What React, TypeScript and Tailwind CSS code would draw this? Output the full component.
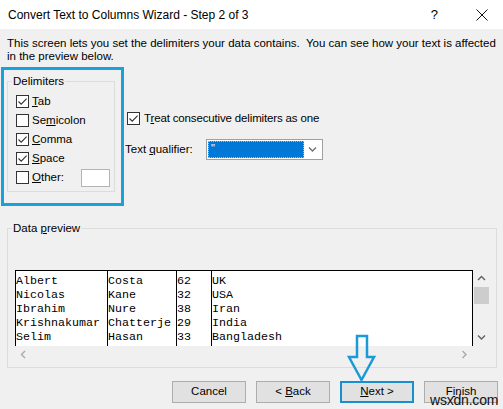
import React from "react";

const rows: [string, string, string, string][] = [
  ["Albert", "Costa", "62", "UK"],
  ["Nicolas", "Kane", "32", "USA"],
  ["Ibrahim", "Nure", "38", "Iran"],
  ["Krishnakumar", "Chatterje", "29", "India"],
  ["Selim", "Hasan", "33", "Bangladesh"],
];

function Check({ checked }: { checked: boolean }) {
  return (
    <span className="flex h-[13px] w-[13px] shrink-0 items-center justify-center border border-[#333333] bg-white">
      {checked && (
        <svg width="11" height="11" viewBox="0 0 11 11">
          <path d="M1.5 5.5 L4.2 8.2 L9.6 2.6" fill="none" stroke="#333333" strokeWidth="1.1" />
        </svg>
      )}
    </span>
  );
}

function Key({ children }: { children: React.ReactNode }) {
  return <span className="underline underline-offset-[1px]">{children}</span>;
}

function Chevron({ dir, color = "#606060" }: { dir: "up" | "down" | "left" | "right"; color?: string }) {
  const d = {
    up: "M1 5 L4.5 1.5 L8 5",
    down: "M1 1.5 L4.5 5 L8 1.5",
    left: "M5 1 L1.5 4.5 L5 8",
    right: "M1.5 1 L5 4.5 L1.5 8",
  }[dir];
  const horiz = dir === "up" || dir === "down";
  return (
    <svg width={horiz ? 9 : 7} height={horiz ? 7 : 9} viewBox={horiz ? "0 0 9 7" : "0 0 7 9"}>
      <path d={d} fill="none" stroke={color} strokeWidth="1.4" />
    </svg>
  );
}

function Button({ children, focused }: { children: React.ReactNode; focused?: boolean }) {
  return (
    <div
      className={
        "flex h-[22px] w-[74px] items-center justify-center whitespace-pre bg-[#e1e1e1] text-black " +
        (focused ? "border-2 border-[#1a8fd0]" : "border border-[#adadad]")
      }
    >
      {children}
    </div>
  );
}

export default function App() {
  return (
    <div className="relative flex h-[409px] w-[503px] flex-col overflow-hidden bg-[#f0f0f0] font-['Liberation_Sans',Arial,sans-serif] text-[11.5px] text-black">
      {/* title bar */}
      <div className="flex h-[29px] shrink-0 items-center bg-white pl-[8px]">
        <span className="text-[12px]">Convert Text to Columns Wizard - Step 2 of 3</span>
        <span className="ml-auto mr-[38px] text-[13px]">?</span>
        <svg className="mr-[15px]" width="12" height="12" viewBox="0 0 12 12">
          <path d="M0.5 0.5 L11.5 11.5 M11.5 0.5 L0.5 11.5" stroke="#111" strokeWidth="1" />
        </svg>
      </div>

      {/* description */}
      <div className="whitespace-pre pl-[7px] pt-[8px] leading-[13px]">
        {"This screen lets you set the delimiters your data contains.  You can see how your text is affected"}
        <br />
        in the preview below.
      </div>

      {/* delimiters + options */}
      <div className="mt-[4px] flex">
        <div className="ml-[1px] h-[139px] w-[123px] shrink-0 border-[3px] border-[#1aa0dc] pl-[3px] pr-[6px] pt-[11px]">
          <div className="relative h-[111px] border border-[#dcdcdc] pl-[8px] pt-[10px]">
            <span className="absolute -top-[8px] left-[4px] bg-[#f0f0f0] px-[1px] leading-[14px]">Delimiters</span>
            <div className="flex h-[19px] items-center gap-[3px]">
              <Check checked />
              <span>
                <Key>T</Key>ab
              </span>
            </div>
            <div className="flex h-[19px] items-center gap-[3px]">
              <Check checked={false} />
              <span>
                Se<Key>m</Key>icolon
              </span>
            </div>
            <div className="flex h-[19px] items-center gap-[3px]">
              <Check checked />
              <span>
                <Key>C</Key>omma
              </span>
            </div>
            <div className="flex h-[19px] items-center gap-[3px]">
              <Check checked />
              <span>
                <Key>S</Key>pace
              </span>
            </div>
            <div className="flex h-[19px] items-center gap-[3px]">
              <Check checked={false} />
              <span>
                <Key>O</Key>ther:
              </span>
              <div className="ml-[14px] h-[18px] w-[29px] border border-[#b4b4b4] bg-white" />
            </div>
          </div>
        </div>

        <div className="flex flex-col pl-[1px] pt-[43px]">
          <div className="ml-[2px] flex items-center gap-[4px]">
            <Check checked />
            <span className="tracking-[-0.15px]">
              T<Key>r</Key>eat consecutive delimiters as one
            </span>
          </div>
          <div className="mt-[12px] flex items-center">
            <span className="w-[81px]">
              Text <Key>q</Key>ualifier:
            </span>
            <div className="flex h-[21px] w-[117px] border border-[#a0a0a0] bg-white p-[1px]">
              <div className="relative flex-1 border border-dotted border-[#8fc3ef] bg-[#0078d7]">
                <span className="absolute left-[2px] top-[-2px] text-[11px] text-white">"</span>
              </div>
              <div className="flex w-[17px] items-center justify-center">
                <Chevron dir="down" color="#707070" />
              </div>
            </div>
          </div>
        </div>
      </div>

      {/* data preview */}
      <div className="relative ml-[7px] mt-[22px] h-[140px] w-[490px] border border-[#dcdcdc] pl-[7px] pt-[41px]">
        <span className="absolute -top-[8px] left-[4px] bg-[#f0f0f0] px-[1px] leading-[14px]">
          Data <Key>p</Key>review
        </span>
        <div className="flex h-[76px]">
          <div className="flex w-[458px] border-r border-t border-black bg-white font-['Liberation_Mono','Courier_New',monospace] text-[11.67px] leading-[14px]">
            {[92, 69, 35, 0].map((w, ci) => (
              <div
                key={ci}
                className={"h-full overflow-hidden whitespace-pre border-l border-black pt-[3px] " + (w ? "" : "flex-1")}
                style={w ? { width: w } : undefined}
              >
                {rows.map((r) => (
                  <div key={r[0]} className="h-[14px]">
                    {r[ci]}
                  </div>
                ))}
              </div>
            ))}
          </div>
          <div className="flex w-[17px] flex-col items-center">
            <div className="flex h-[17px] items-center justify-center">
              <Chevron dir="up" />
            </div>
            <div className="h-[17px] w-[15px] bg-[#cdcdcd]" />
            <div className="flex-1" />
            <div className="flex h-[17px] items-center justify-center">
              <Chevron dir="down" />
            </div>
          </div>
        </div>
        <div className="flex h-[17px] w-[458px] items-center justify-between px-[5px]">
          <Chevron dir="left" color="#a8a8a8" />
          <Chevron dir="right" color="#a8a8a8" />
        </div>
      </div>

      {/* buttons */}
      <div className="mt-[13px] flex justify-end gap-[10px] pr-[5px]">
        <Button>Cancel</Button>
        <Button>
          {"< "}
          <Key>B</Key>ack
        </Button>
        <Button focused>
          <Key>N</Key>
          {"ext >"}
        </Button>
        <Button>
          F<Key>i</Key>nish
        </Button>
      </div>

      {/* callout arrow pointing at the Next button */}
      <svg className="absolute left-[346px] top-[334px]" width="30" height="49" viewBox="0 0 30 49">
        <path
          d="M11 2 L21 2 L21 23 L28 23 L15.5 46 L3 23 L11 23 Z"
          fill="none"
          stroke="#1a9ad8"
          strokeWidth="2.5"
          strokeLinejoin="miter"
        />
      </svg>

      {/* site watermark */}
      <span className="absolute left-[430px] top-[393px] text-[14px] leading-[14px] tracking-[-0.2px] text-[#111]">
        wsxdn.com
      </span>
    </div>
  );
}
